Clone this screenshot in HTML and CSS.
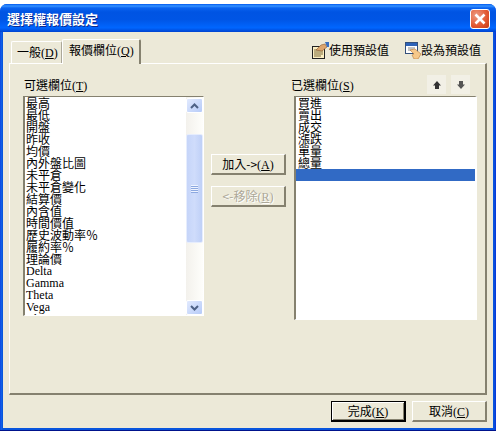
FILE: index.html
```html
<!DOCTYPE html>
<html lang="zh-Hant">
<head>
<meta charset="utf-8">
<title>選擇權報價設定</title>
<link rel="stylesheet" href="styles.css">
</head>
<body>
<div class="window">
  <header class="titlebar">
    <span class="title">選擇權報價設定</span>
    <span class="close">
      <svg width="18" height="18" viewBox="0 0 18 18"><path d="M4.500 4.500l9 9M13.500 4.500l-9 9" stroke="#fff" stroke-width="2.600" fill="none"/></svg>
    </span>
  </header>
  <div class="client">
    <div class="tabrow">
      <div class="tabs">
        <span class="tab tab-off">一般<span class="mn">(<u>D</u>)</span></span>
        <span class="tab tab-on">報價欄位<span class="mn">(<u>Q</u>)</span></span>
      </div>
      <div class="tools">
        <span class="tool">
          <svg class="icon-a" width="17" height="17" viewBox="0 0 17 17"><rect x="0.500" y="4.500" width="12" height="12" fill="#fbeec2" stroke="#222"/><path d="M2 8h9M2 10h9M2 12h9M2 14h7" stroke="#7a6a3a"/><path d="M4 8l5-5 4-1 2 3-5 4z" fill="#dca56e" stroke="#8a5a30" stroke-width=".6"/><path d="M13 0h4v5h-2z" fill="#3a6fc0"/></svg>
          使用預設值
        </span>
        <span class="tool">
          <svg class="icon-b" width="16" height="17" viewBox="0 0 16 17"><rect x="0.500" y="0.500" width="12" height="11" fill="#fff" stroke="#34507c"/><rect x="1" y="1" width="11" height="3" fill="#2d62b8"/><path d="M3 6h7M3 8h5" stroke="#888"/><path d="M5 8l5-1 6 5-3 5h-4l-2-4 2-1z" fill="#f6c88a" stroke="#b87a3a" stroke-width=".6"/></svg>
          設為預設值
        </span>
      </div>
    </div>
    <section class="panel">
      <div class="col col-left">
        <div class="label label-left">可選欄位<span class="mn">(<u>T</u>)</span></div>
        <div class="listbox listbox-left">
          <ul class="items">
            <li>最高</li><li>最低</li><li>開盤</li><li>昨收</li><li>均價</li><li>內外盤比圖</li><li>未平倉</li><li>未平倉變化</li><li>結算價</li><li>內含值</li><li>時間價值</li><li>歷史波動率％</li><li>履約率％</li><li>理論價</li><li>Delta</li><li>Gamma</li><li>Theta</li><li>Vega</li><li>Rho</li>
          </ul>
          <div class="scrollbar">
            <span class="sb-btn">
              <svg width="9" height="6" viewBox="0 0 9 6"><path d="M1 5l3.500-3.500L8 5" stroke="#4d6185" stroke-width="2" fill="none"/></svg>
            </span>
            <span class="sb-track">
              <span class="sb-thumb"><span class="grip"></span></span>
            </span>
            <span class="sb-btn">
              <svg width="9" height="6" viewBox="0 0 9 6"><path d="M1 1l3.500 3.500L8 1" stroke="#4d6185" stroke-width="2" fill="none"/></svg>
            </span>
          </div>
        </div>
      </div>
      <div class="col-mid">
        <button class="btn btn-add">加入-&gt;<span class="mn">(<u>A</u>)</span></button>
        <button class="btn btn-disabled">&lt;-移除<span class="mn">(<u>R</u>)</span></button>
      </div>
      <div class="col col-right">
        <div class="label-row">
          <div class="label">已選欄位<span class="mn">(<u>S</u>)</span></div>
          <div class="arrows">
            <span class="arrow"><svg width="10" height="10" viewBox="0 0 10 10"><path d="M5 1l4 4.500H7V9H3V5.500H1z" fill="#333"/></svg></span>
            <span class="arrow"><svg width="10" height="10" viewBox="0 0 10 10"><path d="M3 1h4v3.500h2L5 9 1 4.500h2z" fill="#555"/></svg></span>
          </div>
        </div>
        <div class="listbox listbox-right">
          <ul class="items">
            <li>買進</li><li>賣出</li><li>成交</li><li>漲跌</li><li>單量</li><li>總量</li><li class="selected">&nbsp;</li>
          </ul>
        </div>
      </div>
    </section>
    <footer class="footer">
      <button class="btn btn-default">完成<span class="mn">(<u>K</u>)</span></button>
      <button class="btn btn-cancel">取消<span class="mn">(<u>C</u>)</span></button>
    </footer>
  </div>
</div>
</body>
</html>
```
FILE: styles.css
```css
* { box-sizing: border-box; }
html, body { margin: 0; padding: 0; background: #fff; }
body { width: 499px; height: 434px; overflow: hidden; font: 12px/12px "Noto Sans CJK TC", "Liberation Serif", serif; color: #000; }
.mn { font-family: "Liberation Serif", serif; }
.window {
  margin-top: 4px; width: 496px; height: 427px;
  background: linear-gradient(90deg, #0831d9 0, #166aee 1px, #0855dd 2px, #0855dd calc(100% - 2px), #0831d9 100%);
  border-radius: 7px 7px 0 0;
  display: flex; flex-direction: column;
  padding: 0 3px 2px;
  border-bottom: 1px solid #00138c;
}
.titlebar {
  height: 28px; flex: none; margin: 0 -3px; padding: 2px 6px 0 7px;
  display: flex; align-items: center; justify-content: space-between;
  border-radius: 7px 7px 0 0;
  background: linear-gradient(180deg, #0058ee 0, #3593ff 2px, #0a62f0 4px, #0054e3 8px, #0055e5 55%, #0066ff 85%, #0043cf 100%);
}
.title { color: #fff; font-size: 13px; font-weight: 700; text-shadow: 1px 1px 0 #0a2a90; }
.close {
  width: 20px; height: 20px; border: 1px solid #fff; border-radius: 3px;
  background: radial-gradient(circle at 30% 30%, #ec9b83, #e2572f 60%, #c23a14);
  display: flex;
}
.client { flex: 1; background: #ece9d8; padding: 8px 6px 0; display: flex; flex-direction: column; }
.tabrow { height: 23px; flex: none; display: flex; justify-content: space-between; }
.tabs { display: flex; align-items: flex-end; padding-left: 2px; }
.tab { display: block; background: #ece9d8; border: 1px solid #fff; border-bottom: 0; border-right: 1px solid #aca899; border-radius: 2px 2px 0 0; white-space: nowrap; }
.tab-off { width: 51px; height: 22px; padding: 4px 0 0 5px; }
.tab-on { width: 79px; height: 25px; padding: 4px 0 0 6px; border-right: 2px solid #85816f; position: relative; z-index: 1; margin-bottom: -1px; }
.tools { display: flex; gap: 16px; padding: 1px 6px 0 0; }
.tool { display: flex; align-items: center; height: 18px; white-space: nowrap; }
.panel {
  height: 332px; flex: none;
  border: 1px solid #fff; border-right: 2px solid #85816f; border-bottom: 2px solid #85816f;
  padding: 13px 0 0 13px;
  display: flex;
}
.col { display: flex; flex-direction: column; }
.col-left { width: 181px; }
.col-right { width: 186px; }
.label { height: 19px; padding-top: 2px; white-space: nowrap; }
.label-left { padding-left: 1px; }
.label-row { height: 19px; flex: none; display: flex; justify-content: space-between; }
.arrows { display: flex; gap: 5px; margin-top: -2px; padding-right: 7px; height: 19px; }
.arrow { width: 19px; height: 19px; background: #f2f0e6; display: flex; align-items: center; justify-content: center; }
.listbox {
  background: #fff; display: flex; overflow: hidden;
  border: 1px solid #fff; border-top: 1px solid #85816f; border-left: 2px solid #85816f;
}
.listbox-left { height: 220px; width: 181px; }
.listbox-right { height: 224px; width: 183px; margin-left: 3px; border-right-width: 2px; }
.items { list-style: none; margin: 0; padding: 0; flex: 1; min-width: 0; overflow: hidden; }
.items li { height: 12px; padding-left: 1px; white-space: nowrap; }
.listbox-left .items li:nth-child(n+15) { font-family: "Liberation Serif", serif; }
.items .selected { background: #316ac5; }
.listbox-right .items li { padding-left: 2px; }
.scrollbar { width: 17px; flex: none; padding-top: 1px; display: flex; flex-direction: column; background: linear-gradient(90deg, #f3f1ec, #fefefb); }
.sb-btn { height: 15px; flex: none; background: linear-gradient(135deg, #e2eafe, #b6cbf8); border: 1px solid #fff; border-radius: 2px; display: flex; align-items: center; justify-content: center; }
.sb-track { flex: 1; display: flex; flex-direction: column; padding-top: 21px; padding-bottom: 57px; }
.sb-thumb { flex: 1; background: linear-gradient(90deg, #c6d5f9, #cfdcfb 50%, #bfd0f7); border: 1px solid #e6edfd; border-radius: 2px; display: flex; align-items: center; justify-content: center; }
.grip { width: 7px; height: 8px; background: repeating-linear-gradient(180deg, #eef3ff 0 1px, #8ca8e0 1px 2px); }
.col-mid { width: 87px; padding: 77px 0 0 7px; display: flex; flex-direction: column; gap: 11px; }
.btn {
  width: 75px; height: 21px; padding: 0; flex: none;
  background: #ece9d8; color: #000;
  border: 1px solid #fff; border-right: 2px solid #85816f; border-bottom: 2px solid #85816f;
  font: inherit; line-height: 12px; white-space: nowrap;
}
.btn-disabled { color: #aca899; text-shadow: 1px 1px 0 #fff; }
.footer { display: flex; justify-content: flex-end; gap: 6px; padding-top: 6px; }
.btn-default { border: 1px solid #000; border-right: 2px solid #000; border-bottom: 2px solid #000; box-shadow: inset 1px 1px 0 #fff, inset -1px -1px 0 #85816f; }
```
